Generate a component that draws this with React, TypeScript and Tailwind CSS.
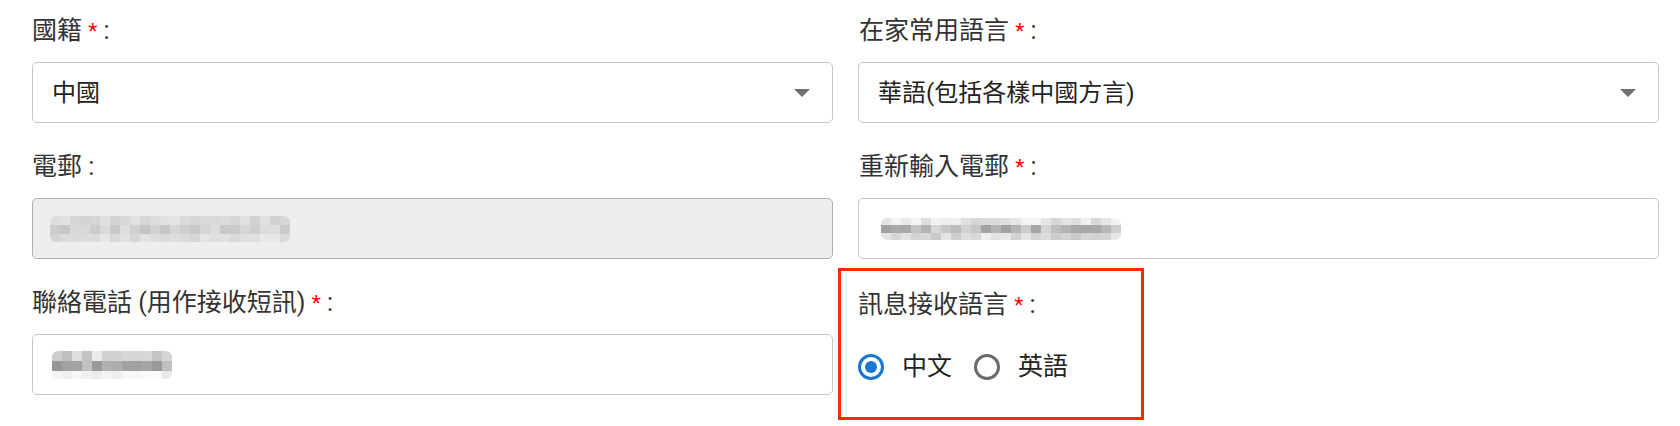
import type { ReactNode } from 'react';

const font = 'font-["Roboto","Noto_Sans_CJK_TC",sans-serif]';

// deterministic pseudo-random greys for the blurred (pixelated) values
function greys(seed: number, count: number, min: number, max: number) {
  const out: number[] = [];
  let s = seed;
  for (let i = 0; i < count; i++) {
    s = (s * 9301 + 49297) % 233280;
    out.push(Math.round(min + (s / 233280) * (max - min)));
  }
  return out;
}

type MosaicProps = {
  cols: number;
  rows: { h: number; min: number; max: number }[];
  cell: number;
  seed: number;
};

function Mosaic({ cols, rows, cell, seed }: MosaicProps) {
  const height = rows.reduce((sum, r) => sum + r.h, 0);
  let y = 0;
  return (
    <svg width={cols * cell} height={height} className="block">
      <defs>
        <clipPath id={`clip-${seed}`}>
          <rect x={0} y={0} width={cols * cell} height={height} rx={6} />
        </clipPath>
      </defs>
      <g clipPath={`url(#clip-${seed})`}>
        {rows.map((row, ri) => {
          const values = greys(seed + ri * 17, cols, row.min, row.max);
          const top = y;
          y += row.h;
          return values.map((v, ci) => (
            <rect
              key={`${ri}-${ci}`}
              x={ci * cell}
              y={top}
              width={cell}
              height={row.h}
              fill={`rgb(${v},${v},${v})`}
            />
          ));
        })}
      </g>
    </svg>
  );
}

function Label({ text, required = false }: { text: string; required?: boolean }) {
  return (
    <div className="flex h-[32px] items-center whitespace-pre text-[25px] leading-[32px] text-[#333]">
      <span>{text}</span>
      {required && (
        <>
          <span> </span>
          <span className="text-[21px] leading-none text-[#f00]">*</span>
        </>
      )}
      <span> :</span>
    </div>
  );
}

function Box({ children, disabled = false }: { children: ReactNode; disabled?: boolean }) {
  return (
    <div
      className={
        disabled
          ? 'mt-[15px] flex h-[61px] items-center rounded-[5px] border border-[#b0b0b0] bg-[#eeeeee] pl-[17px] pr-[22px]'
          : 'mt-[15px] flex h-[61px] items-center rounded-[5px] border border-[#c6c6c6] bg-white pl-[19px] pr-[22px]'
      }
    >
      {children}
    </div>
  );
}

function SelectBox({ value }: { value: string }) {
  return (
    <Box>
      <span className="flex-1 text-[24px] text-[#222]">{value}</span>
      <svg width="16" height="8" viewBox="0 0 16 8" className="block">
        <path d="M0 0 L16 0 L8 8 Z" fill="#6f6f6f" />
      </svg>
    </Box>
  );
}

function Radio({ checked, label }: { checked: boolean; label: string }) {
  return (
    <div className="flex items-center gap-[18px]">
      <span
        className={
          checked
            ? 'grid h-[26px] w-[26px] place-items-center rounded-full border-[3px] border-[#1976d2]'
            : 'grid h-[26px] w-[26px] place-items-center rounded-full border-[3px] border-[#6b6b6b]'
        }
      >
        {checked && <span className="h-[12px] w-[12px] rounded-full bg-[#1976d2]" />}
      </span>
      <span className="text-[25px] leading-[32px] text-[#222]">{label}</span>
    </div>
  );
}

export default function App() {
  return (
    <div className={`h-[426px] w-[1680px] overflow-hidden bg-white ${font}`}>
      <div className="grid grid-cols-2 gap-x-[25px] gap-y-[28px] pl-[32px] pr-[21px] pt-[15px]">
        <div>
          <Label text="國籍" required />
          <SelectBox value="中國" />
        </div>

        <div>
          <div className="pl-[1px]">
            <Label text="在家常用語言" required />
          </div>
          <SelectBox value="華語(包括各樣中國方言)" />
        </div>

        <div>
          <Label text="電郵" />
          <Box disabled>
            <Mosaic
              cols={24}
              cell={10}
              seed={11}
              rows={[
                { h: 9, min: 208, max: 228 },
                { h: 9, min: 196, max: 222 },
                { h: 8, min: 212, max: 232 },
              ]}
            />
          </Box>
        </div>

        <div>
          <div className="pl-[1px]">
            <Label text="重新輸入電郵" required />
          </div>
          <Box>
            <div className="pl-[3px]">
              <Mosaic
                cols={24}
                cell={10}
                seed={29}
                rows={[
                  { h: 7, min: 215, max: 245 },
                  { h: 8, min: 160, max: 215 },
                  { h: 7, min: 200, max: 240 },
                ]}
              />
            </div>
          </Box>
        </div>

        <div>
          <Label text="聯絡電話 (用作接收短訊)" required />
          <Box>
            <Mosaic
              cols={12}
              cell={10}
              seed={53}
              rows={[
                { h: 10, min: 190, max: 235 },
                { h: 10, min: 150, max: 205 },
                { h: 8, min: 232, max: 250 },
              ]}
            />
          </Box>
        </div>

        <div>
          <div className="-ml-[20px] -mt-[19px] w-[306px] border-[3px] border-[#ff2a00] pb-[34px] pl-[17px] pt-[18px]">
            <Label text="訊息接收語言" required />
            <div className="mt-[30px] flex items-center gap-[22px]">
              <Radio checked label="中文" />
              <Radio checked={false} label="英語" />
            </div>
          </div>
        </div>
      </div>
    </div>
  );
}
